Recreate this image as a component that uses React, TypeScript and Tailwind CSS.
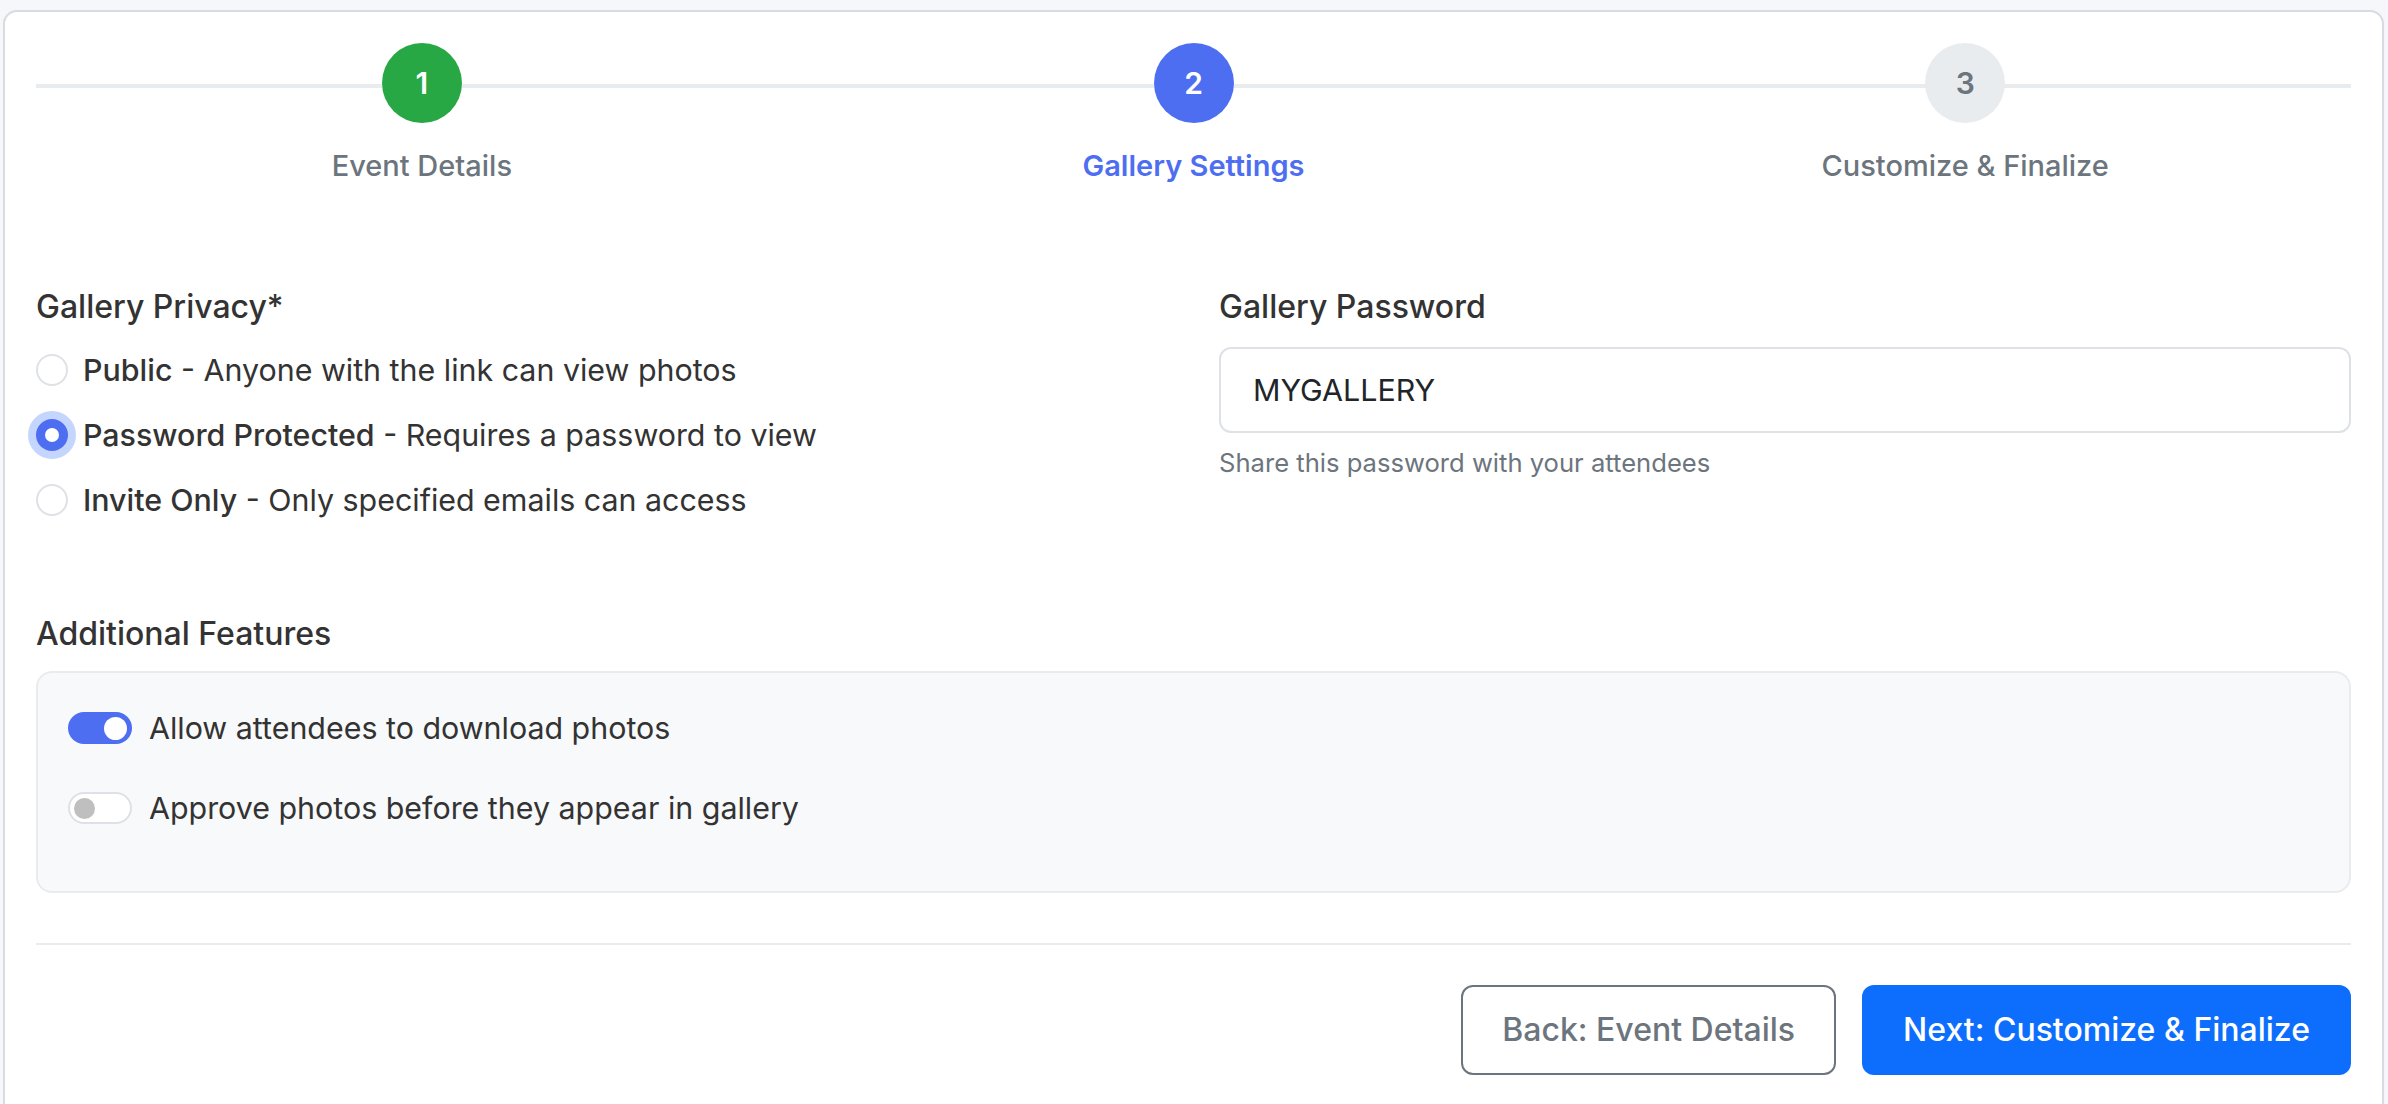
import React from "react";

const steps = [
  { n: "1", label: "Event Details", state: "done" },
  { n: "2", label: "Gallery Settings", state: "active" },
  { n: "3", label: "Customize & Finalize", state: "todo" },
];

function StepCircle({ n, state }: { n: string; state: string }) {
  const cls =
    state === "done"
      ? "bg-[#28a745] text-white"
      : state === "active"
      ? "bg-[#4e6ef2] text-white"
      : "bg-[#e9ecef] text-[#6c757d]";
  return (
    <div className={`w-[80px] h-[80px] rounded-full flex items-center justify-center text-[30px] font-semibold ${cls}`}>
      {n}
    </div>
  );
}

function Radio({ checked }: { checked?: boolean }) {
  if (checked) {
    return (
      <div className="w-[32px] h-[32px] rounded-full bg-[#4e6ef2] flex items-center justify-center shadow-[0_0_0_8px_#c4d6fd] shrink-0">
        <div className="w-[14px] h-[14px] rounded-full bg-white" />
      </div>
    );
  }
  return <div className="w-[32px] h-[32px] rounded-full border-2 border-[#dee2e6] bg-white shrink-0" />;
}

function Toggle({ on }: { on?: boolean }) {
  if (on) {
    return (
      <div className="w-[64px] h-[32px] rounded-full bg-[#4e6ef2] flex items-center justify-end pr-[5px] shrink-0">
        <div className="w-[23px] h-[23px] rounded-full bg-white" />
      </div>
    );
  }
  return (
    <div className="w-[64px] h-[32px] rounded-full border-2 border-[#dee2e6] bg-white flex items-center pl-[4px] shrink-0">
      <div className="w-[21px] h-[21px] rounded-full bg-[#bfbfbf]" />
    </div>
  );
}

const radios = [
  { strong: "Public", rest: " - Anyone with the link can view photos", checked: false },
  { strong: "Password Protected", rest: " - Requires a password to view", checked: true },
  { strong: "Invite Only", rest: " - Only specified emails can access", checked: false },
];

export default function App() {
  return (
    <div className="min-h-screen bg-[#f5f7fa] pt-[10px] pl-[3px] pr-[4px] font-['Inter','Noto_Sans',sans-serif] text-[#333333]">
      <div className="bg-white border-2 border-[#d8dbdf] rounded-[14px] px-[31px] pt-[31px] pb-[40px]">
        {/* Stepper */}
        <div className="relative">
          <div className="absolute left-0 right-0 top-[41px] h-[4px] bg-[#e9ecef]" />
          <div className="relative flex">
            {steps.map((s) => (
              <div key={s.n} className="flex-1 flex flex-col items-center">
                <StepCircle n={s.n} state={s.state} />
                <div
                  className={`mt-[22px] text-[29px] leading-[42px] ${
                    s.state === "active" ? "text-[#4e6ef2] font-semibold" : "text-[#6c757d] font-medium"
                  }`}
                >
                  {s.label}
                </div>
              </div>
            ))}
          </div>
        </div>

        {/* Privacy + password */}
        <div className="grid grid-cols-2 gap-x-[51px] mt-[96px]">
          <div>
            <div className="text-[32px] leading-[48px] font-medium">Gallery Privacy*</div>
            <div className="mt-[17px] flex flex-col gap-[21px]">
              {radios.map((r) => (
                <div key={r.strong} className="flex items-center h-[44px] gap-[15px]">
                  <Radio checked={r.checked} />
                  <div className="text-[30.4px] leading-[44px] whitespace-nowrap">
                    <span className="font-medium">{r.strong}</span>
                    <span>{r.rest}</span>
                  </div>
                </div>
              ))}
            </div>
          </div>
          <div>
            <div className="text-[32px] leading-[48px] font-medium">Gallery Password</div>
            <input
              readOnly
              value="MYGALLERY"
              className="mt-[16px] w-full h-[86px] border-2 border-[#dee2e6] rounded-[12px] px-[32px] text-[30.4px] text-[#212529] outline-none bg-white"
            />
            <div className="mt-[12px] text-[25.6px] leading-[36px] text-[#6c757d]">Share this password with your attendees</div>
          </div>
        </div>

        {/* Additional features */}
        <div className="mt-[88px] text-[32px] leading-[48px] font-medium">Additional Features</div>
        <div className="mt-[13px] h-[222px] bg-[#f8f9fa] border-2 border-[#e9ecef] rounded-[16px] px-[30px] pt-[39px] flex flex-col gap-[48px]">
          <div className="flex items-center gap-[17px] h-[32px]">
            <Toggle on />
            <div className="text-[30.4px] leading-[44px]">Allow attendees to download photos</div>
          </div>
          <div className="flex items-center gap-[17px] h-[32px]">
            <Toggle />
            <div className="text-[30.4px] leading-[44px]">Approve photos before they appear in gallery</div>
          </div>
        </div>

        {/* Footer */}
        <div className="mt-[50px] h-[2px] bg-[#e9ecef]" />
        <div className="mt-[40px] flex justify-end gap-[26px]">
          <button className="h-[90px] px-[39px] border-2 border-[#6c757d] rounded-[12px] text-[32px] font-medium text-[#6c757d] bg-white">
            Back: Event Details
          </button>
          <button className="h-[90px] px-[41px] rounded-[12px] text-[32px] font-medium text-white bg-[#0d6efd]">
            Next: Customize &amp; Finalize
          </button>
        </div>
      </div>
    </div>
  );
}
